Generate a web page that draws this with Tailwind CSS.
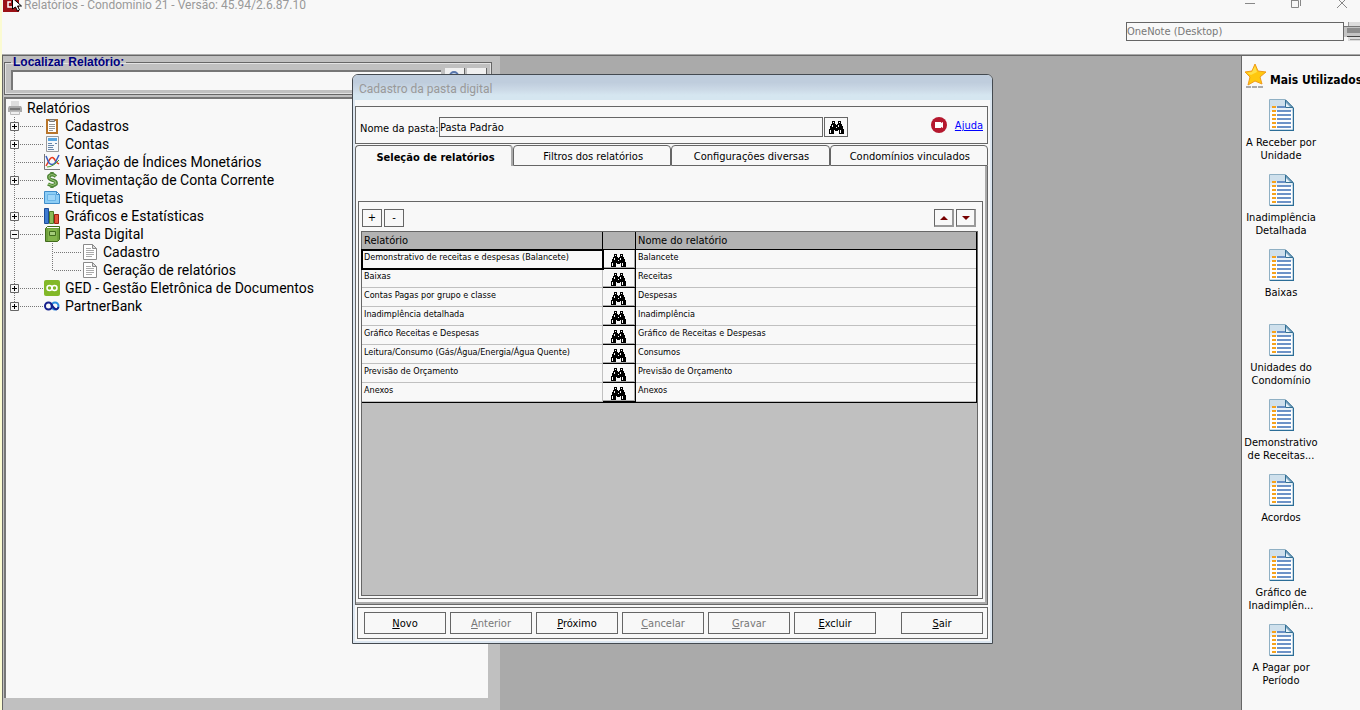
<!DOCTYPE html>
<html lang="pt-BR">
<head>
  <meta charset="UTF-8" />
  <meta name="viewport" content="width=device-width, initial-scale=1.0" />
  <title>Relatórios - Condomínio 21</title>
  <script src="https://cdn.jsdelivr.net/npm/@tailwindcss/browser@4"></script>
</head>
<body class="h-screen flex flex-col overflow-hidden bg-[#f8f8f8] border-l-2 border-[#fbfbd2] text-black text-[11px] leading-[13px] font-['DejaVu_Sans_Condensed','DejaVu_Sans',sans-serif]">

  <!-- Ícones reutilizados -->
  <svg class="hidden">
    <symbol id="binoculo" viewBox="0 0 15 13" shape-rendering="crispEdges">
      <path fill="#000" d="M3 0h3v3h1v1h1V3h1V0h3v3h1v2h1v3h1v5h-5V9H9v1H6V9H5v4H0V8h1V5h1V3h1z" />
      <path fill="#f8f8f8" d="M4 1h1v1H4zM10 1h1v1h-1zM3 4h1v2H3zM9 4h1v2H9zM7 6h1v1H7zM1 9h1v3H1zM11 9h1v3h-1z" />
    </symbol>
    <symbol id="relatorio" viewBox="0 0 25 32">
      <path fill="#fff" stroke="#8fb0c4" d="M.5.5h16l8 8v23H.5z" />
      <path fill="#cfe0ec" d="M1 1h15v6l-7 1-8 5z" />
      <path fill="#e9f1f7" d="M1 9l9-2 8 2h6v3H1z" />
      <path fill="none" stroke="#2b6d97" stroke-width="1.500" d="M24.500 9v22.500H1" />
      <path fill="#7fa8c4" stroke="#336f94" d="M16.500 1v7.500h7.500z" />
      <path fill="#e8f2f9" d="M17 4l4 4h-4z" />
      <path stroke="#f5a21d" stroke-width="2" d="M3 8h4M3 12h4M3 16h4M3 20h4M3 24h4M3 28h4" />
      <path stroke="#3f70b5" stroke-width="1.500" d="M8 8h8M8 12h14M8 16h14M8 20h14M8 24h14M8 28h14" />
    </symbol>
    <symbol id="folha" viewBox="0 0 16 16">
      <path fill="#fff" stroke="#8a8a8a" d="M1.500.5h9l4 4v11h-13z" />
      <path fill="#ddd" stroke="#8a8a8a" d="M10.500.5v4h4z" />
      <path stroke="#aaa" d="M4 4.500h5M4 6.500h8M4 8.500h8M4 10.500h8M4 12.500h6" />
    </symbol>
    <symbol id="no-mais" viewBox="0 0 34 18">
      <path stroke="#777" stroke-dasharray="1 1" d="M4.500 0v18M10 9.500h24" />
      <path fill="#f8f8f8" stroke="#666" d="M.5 5.500h8v8h-8z" />
      <path stroke="#000" d="M2 9.500h5M4.500 7v5" />
    </symbol>
    <symbol id="no-menos" viewBox="0 0 34 18">
      <path stroke="#777" stroke-dasharray="1 1" d="M4.500 0v18M10 9.500h24" />
      <path fill="#f8f8f8" stroke="#666" d="M.5 5.500h8v8h-8z" />
      <path stroke="#000" d="M2 9.500h5" />
    </symbol>
    <symbol id="no-ultimo" viewBox="0 0 34 18">
      <path stroke="#777" stroke-dasharray="1 1" d="M4.500 0v9M10 9.500h24" />
      <path fill="#f8f8f8" stroke="#666" d="M.5 5.500h8v8h-8z" />
      <path stroke="#000" d="M2 9.500h5M4.500 7v5" />
    </symbol>
    <symbol id="no-linha" viewBox="0 0 34 18">
      <path stroke="#777" stroke-dasharray="1 1" d="M4.500 0v18M6 9.500h28" />
    </symbol>
    <symbol id="no-filho" viewBox="0 0 72 18">
      <path stroke="#777" stroke-dasharray="1 1" d="M4.500 0v18M42.500 0v18M44 9.500h28" />
    </symbol>
    <symbol id="no-filho-ultimo" viewBox="0 0 72 18">
      <path stroke="#777" stroke-dasharray="1 1" d="M4.500 0v18M42.500 0v9M44 9.500h28" />
    </symbol>
  </svg>

  <!-- Barra de título -->
  <header class="flex flex-col h-[55px] shrink-0 border-b border-[#aaa]">
    <div class="flex h-4 items-start justify-between">
      <div class="flex items-start">
        <svg class="w-5 h-3 ml-px" viewBox="0 0 20 12">
          <path fill="#9b1116" d="M0 0h16v12H0z" />
          <path fill="none" stroke="#fff" stroke-width="1.500" d="M8 2H5v5h4" />
          <path fill="#fff" stroke="#000" d="M9.500-2v11l3-2 2 4 2-1-2-4h4z" />
        </svg>
        <h1 class="text-xs leading-[11px] text-[#999] ml-px font-[Roboto,sans-serif]">Relatórios - Condomínio 21 - Versão: 45.94/2.6.87.10</h1>
      </div>
      <div class="flex gap-[34px] pr-3 text-[#888]">
        <button aria-label="Minimizar"><svg class="w-3 h-2.5" viewBox="0 0 12 10"><path stroke="currentColor" d="M1 3.500h10" /></svg></button>
        <button aria-label="Restaurar"><svg class="w-3 h-2.5" viewBox="0 0 12 10"><path fill="none" stroke="currentColor" d="M1.500-2v9.500h7V.5h-7M10.500 0v6" /></svg></button>
        <button aria-label="Fechar"><svg class="w-3 h-2.5" viewBox="0 0 12 10"><path stroke="currentColor" d="M1-2l10 10M11-2L1 8" /></svg></button>
      </div>
    </div>
    <div class="flex justify-end pt-1.5">
      <select aria-label="Impressora" class="appearance-none w-[218px] h-[19px] border border-[#666] text-[#777]">
        <option>OneNote (Desktop)</option>
      </select>
      <button aria-label="Imprimir" class="w-4 h-[19px]">
        <svg class="w-4 h-[19px]" viewBox="0 0 16 19">
          <path fill="#dcdcdc" d="M4 0h12v19H4z" />
          <path fill="#c4c4c4" d="M0 5h16v10H0z" />
          <path fill="#8d8d8d" d="M3 6h13v5H3z" />
          <path fill="#444" d="M3 14h13v1H3z" />
          <path fill="#777" d="M0 4h16v1H0z" />
          <path stroke="#999" d="M4.500 0v4M6 17.500h10" />
        </svg>
      </button>
    </div>
  </header>

  <main class="relative flex flex-1 min-h-0 border-t border-[#666] bg-[#aaa]">

    <!-- Painel de relatórios -->
    <aside class="w-[498px] shrink-0 flex flex-col bg-[#c0c0c0] border-l border-[#666] pl-px pb-3">
      <fieldset class="h-[39px] w-[488px] border border-[#666] ring-1 ring-inset ring-[#f8f8f8]/60 pl-1.5 flex font-['Liberation_Sans',sans-serif]">
        <legend class="px-0.5 h-3 text-xs leading-3 font-bold text-[#000080]"><label for="localizar">Localizar Relatório:</label></legend>
        <input id="localizar" type="text" class="w-[430px] h-5 mt-0.5 bg-[#f8f8f8] border-t-2 border-l-2 border-[#777] px-1" />
        <button aria-label="Pesquisar" class="w-5 h-5 ml-1 bg-[#f0f0f0] border-r border-[#666]"><svg class="w-4 h-4 mx-auto" viewBox="0 0 16 16"><circle cx="7" cy="6" r="4" fill="#c8d8ec" stroke="#5876ac" stroke-width="2" /><path stroke="#777" stroke-width="2" d="M10 9l4 4" /></svg></button>
        <button aria-label="Limpar" class="w-5 h-5 ml-0.5 bg-[#f0f0f0] border-r border-[#666]"></button>
      </fieldset>
      <nav class="flex-1 w-[484px] mt-0.5 bg-[#f8f8f8] border-l-2 border-t-2 border-[#777] text-sm leading-[18px] font-[Roboto,sans-serif]">
        <div class="flex items-center h-[18px] pl-0.5 gap-[5px]">
          <svg class="w-3.5 h-4" viewBox="0 0 14 16"><path fill="#ddd" d="M3 1h8v5H3z" /><path fill="#aaa" d="M1 6h12l1 2v4H0V8z" /><path fill="#777" d="M2 8h10v2H2z" /><path fill="#eee" stroke="#bbb" d="M2.500 11.500h9v3h-9z" /></svg>
          <a href="#">Relatórios</a>
        </div>
        <ul class="pl-1">
          <li class="flex items-center h-[18px]">
            <button aria-label="Expandir"><svg class="w-[34px] h-[18px]"><use href="#no-mais" /></svg></button>
            <svg class="w-4 h-4" viewBox="0 0 16 16"><path fill="#fff" stroke="#b8752a" stroke-width="2" d="M3 2h10v13H3z" /><path fill="#ccc" stroke="#777" d="M5.500 1.500h5v2h-5z" /><path stroke="#999" d="M5 6.500h6M5 8.500h6M5 10.500h6M5 12.500h4" /></svg>
            <a href="#" class="ml-[5px]">Cadastros</a>
          </li>
          <li class="flex items-center h-[18px]">
            <button aria-label="Expandir"><svg class="w-[34px] h-[18px]"><use href="#no-mais" /></svg></button>
            <svg class="w-4 h-4" viewBox="0 0 16 16"><path fill="#f4f8fb" stroke="#999" d="M2.500.5h12v15h-12z" /><path fill="#58a6e0" d="M4 2h9v3H4z" /><path stroke="#6685a8" d="M4 7.500h4M4 9.500h6M4 11.500h5M4 13.500h6M11 7.500h2" /></svg>
            <a href="#" class="ml-[5px]">Contas</a>
          </li>
          <li class="flex items-center h-[18px]">
            <svg class="w-[34px] h-[18px]"><use href="#no-linha" /></svg>
            <svg class="w-4 h-4" viewBox="0 0 16 16"><path fill="none" stroke="#777" d="M.5 0v15.500H16" /><path fill="none" stroke="#e8391c" stroke-width="1.500" d="M2 12L6 5q3-4 6 3l3 2" /><path fill="none" stroke="#3a5fc0" stroke-width="1.500" d="M2 2l3 7q3 3 6 0l4-8" /><path fill="none" stroke="#55a030" d="M3 13q6 0 12-7" /></svg>
            <a href="#" class="ml-[5px]">Variação de Índices Monetários</a>
          </li>
          <li class="flex items-center h-[18px]">
            <button aria-label="Expandir"><svg class="w-[34px] h-[18px]"><use href="#no-mais" /></svg></button>
            <svg class="w-4 h-4" viewBox="0 0 16 16"><path fill="none" stroke="#4e8436" stroke-width="3.500" d="M12 4.500Q8 1 5 4q-1 3 3 4 5 1 4 4-3 3-8 0M8 0v3M8 13v3" /><path fill="none" stroke="#9cca79" d="M12 4.500Q8 1 5 4q-1 3 3 4 5 1 4 4-3 3-8 0" /></svg>
            <a href="#" class="ml-[5px]">Movimentação de Conta Corrente</a>
          </li>
          <li class="flex items-center h-[18px]">
            <svg class="w-[34px] h-[18px]"><use href="#no-linha" /></svg>
            <svg class="w-4 h-4" viewBox="0 0 16 16"><path fill="#8ccdf5" stroke="#3f8cc9" d="M.5 1.500h12l3 3v9H.5z" /><path fill="#9fd6f8" stroke="#6bb4e6" d="M3.500 4.500h8v6h-8z" /><path fill="#fff" stroke="#3f8cc9" d="M12.500 1.500v3h3z" /></svg>
            <a href="#" class="ml-[5px]">Etiquetas</a>
          </li>
          <li class="flex items-center h-[18px]">
            <button aria-label="Expandir"><svg class="w-[34px] h-[18px]"><use href="#no-mais" /></svg></button>
            <svg class="w-4 h-4" viewBox="0 0 16 16"><path fill="#3d7bd0" stroke="#1c4c98" d="M.5.5h4v15h-4z" /><path fill="#8dbb58" stroke="#4f7d28" d="M5.500 3.500h4v12h-4z" /><path fill="#e2543a" stroke="#9c1f12" d="M10.500 6.500h4v9h-4z" /></svg>
            <a href="#" class="ml-[5px]">Gráficos e Estatísticas</a>
          </li>
          <li>
            <div class="flex items-center h-[18px]">
              <button aria-label="Recolher"><svg class="w-[34px] h-[18px]"><use href="#no-menos" /></svg></button>
              <svg class="w-4 h-4" viewBox="0 0 16 16"><path fill="#6fa03c" stroke="#416b1c" d="M1.500 2.500l2-2h12v13l-2 2h-12z" /><path fill="#82b44b" d="M4 3h9v12H4z" /><path fill="#a5cb7b" stroke="#416b1c" d="M5.500 5.500h6v4h-6z" /><path stroke="#fff" d="M3 1.500h12" /></svg>
              <a href="#" class="ml-[5px]">Pasta Digital</a>
            </div>
            <ul>
              <li class="flex items-center h-[18px]">
                <svg class="w-[72px] h-[18px]"><use href="#no-filho" /></svg>
                <svg class="w-4 h-4"><use href="#folha" /></svg>
                <a href="#" class="ml-[5px]">Cadastro</a>
              </li>
              <li class="flex items-center h-[18px]">
                <svg class="w-[72px] h-[18px]"><use href="#no-filho-ultimo" /></svg>
                <svg class="w-4 h-4"><use href="#folha" /></svg>
                <a href="#" class="ml-[5px]">Geração de relatórios</a>
              </li>
            </ul>
          </li>
          <li class="flex items-center h-[18px]">
            <button aria-label="Expandir"><svg class="w-[34px] h-[18px]"><use href="#no-mais" /></svg></button>
            <svg class="w-4 h-4" viewBox="0 0 16 16"><rect width="16" height="16" rx="2" fill="#82b828" /><g fill="none" stroke="#fff" stroke-width="1.500"><circle cx="5.500" cy="8" r="2.500" /><circle cx="10.500" cy="8" r="2.500" /></g></svg>
            <a href="#" class="ml-[5px]">GED - Gestão Eletrônica de Documentos</a>
          </li>
          <li class="flex items-center h-[18px]">
            <button aria-label="Expandir"><svg class="w-[34px] h-[18px]"><use href="#no-ultimo" /></svg></button>
            <svg class="w-4 h-4" viewBox="0 0 16 16" fill="none" stroke-width="2"><circle cx="11" cy="8" r="3.500" stroke="#2b8fe0" /><circle cx="4.500" cy="8" r="3.500" stroke="#15208c" /><path stroke="#15208c" d="M7 6l3 4q3 3 4.500-1" /></svg>
            <a href="#" class="ml-[5px]">PartnerBank</a>
          </li>
        </ul>
      </nav>
    </aside>

    <!-- Mais utilizados -->
    <aside class="ml-auto w-[119px] shrink-0 bg-[#f8f8f8] border-l border-[#666] overflow-hidden">
      <h2 class="flex items-center gap-0.5 h-[43px] pl-0.5 text-xs font-bold whitespace-nowrap">
        <svg class="w-6 h-[26px] shrink-0 -mt-1" viewBox="0 0 24 26"><path fill="#ffc80f" stroke="#f09a18" d="M11 1l3 7 8 1-6 5 2 7-7-3-7 4 2-8-5-5 7-1z" /><path fill="#ffe04a" d="M11 3l2 6-6 3-4-2 5-1z" /><path stroke="#aaa" stroke-width="2" stroke-dasharray="5 1" d="M2 24h18" /></svg>
        <span class="pt-1">Mais Utilizados</span>
      </h2>
      <ul class="w-[78px] text-center">
        <li class="h-[75px]"><svg class="w-[25px] h-8 mx-auto"><use href="#relatorio" /></svg><a href="#" class="block pt-[5px]">A Receber por<br />Unidade</a></li>
        <li class="h-[75px]"><svg class="w-[25px] h-8 mx-auto"><use href="#relatorio" /></svg><a href="#" class="block pt-[5px]">Inadimplência<br />Detalhada</a></li>
        <li class="h-[75px]"><svg class="w-[25px] h-8 mx-auto"><use href="#relatorio" /></svg><a href="#" class="block pt-[5px]">Baixas</a></li>
        <li class="h-[75px]"><svg class="w-[25px] h-8 mx-auto"><use href="#relatorio" /></svg><a href="#" class="block pt-[5px]">Unidades do<br />Condomínio</a></li>
        <li class="h-[75px]"><svg class="w-[25px] h-8 mx-auto"><use href="#relatorio" /></svg><a href="#" class="block pt-[5px]">Demonstrativo<br />de Receitas...</a></li>
        <li class="h-[75px]"><svg class="w-[25px] h-8 mx-auto"><use href="#relatorio" /></svg><a href="#" class="block pt-[5px]">Acordos</a></li>
        <li class="h-[75px]"><svg class="w-[25px] h-8 mx-auto"><use href="#relatorio" /></svg><a href="#" class="block pt-[5px]">Gráfico de<br />Inadimplên...</a></li>
        <li class="h-[75px]"><svg class="w-[25px] h-8 mx-auto"><use href="#relatorio" /></svg><a href="#" class="block pt-[5px]">A Pagar por<br />Período</a></li>
      </ul>
    </aside>

    <!-- Janela: Cadastro da pasta digital -->
    <section role="dialog" aria-labelledby="titulo-janela" class="absolute left-[350px] top-[18px] w-[641px] bg-[#f8f8f8] border border-[#444a50] rounded-t-md overflow-hidden">
      <h2 id="titulo-janela" class="h-[25px] pl-1.5 pt-0.5 text-xs leading-6 text-[#999] bg-linear-to-b from-[#bfcddd] from-30% via-[#ccdae7] via-60% to-[#d5e6f0] to-80% font-[Roboto,sans-serif]">Cadastro da pasta digital</h2>
      <div class="border-x-2 border-b-2 border-[#dde7f1] pt-1.5 pr-0.5 pb-0.5">

        <div class="flex items-center h-[38px] border border-[#666] pl-1 pr-1">
          <label for="nome" class="w-[79px] pt-1.5 whitespace-nowrap">Nome da pasta:</label>
          <input id="nome" type="text" value="Pasta Padrão" class="w-[384px] h-5 mt-1 border border-[#666]" />
          <button aria-label="Procurar pasta" class="w-6 h-5 mt-1 ml-px border border-[#666] flex items-center justify-center"><svg class="w-[15px] h-[13px]"><use href="#binoculo" /></svg></button>
          <svg class="w-4 h-4 ml-auto" viewBox="0 0 16 16"><circle cx="8" cy="8" r="8" fill="#b5182e" /><path fill="#fff" d="M4 5h6v1l2-1v6l-2-1v1H4z" /></svg>
          <a href="#" class="ml-2 text-[#0000ff] underline">Ajuda</a>
        </div>

        <!-- Abas -->
        <div role="tablist" class="flex mt-px h-[21px]">
          <button role="tab" aria-selected="true" class="w-[158px] pt-0.5 pl-1 border-t border-l border-r-2 border-[#666] border-r-[#aaa] rounded-t font-bold">Seleção de relatórios</button>
          <button role="tab" class="flex-1 pt-0.5 pl-0.5 border border-[#666] rounded-t">Filtros dos relatórios</button>
          <button role="tab" class="flex-1 pt-0.5 pl-0.5 border border-[#666] rounded-t">Configurações diversas</button>
          <button role="tab" class="flex-1 pt-0.5 pl-0.5 border border-[#666] rounded-t">Condomínios vinculados</button>
        </div>

        <div role="tabpanel" class="border-x border-b border-[#666] shadow-[inset_-2px_-2px_#aaa] pt-[35px] pl-0.5 pr-1 pb-[5px]">
          <div class="border border-[#666] pt-[7px] pl-0.5 pr-1 pb-0.5">
            <div class="flex gap-0.5 pl-px pr-0.5">
              <button class="w-5 h-[18px] border border-[#666] leading-4">+</button>
              <button class="w-5 h-[18px] border border-[#666] leading-4">-</button>
              <button aria-label="Subir" class="w-5 h-[18px] border border-[#666] border-r-2 border-b-2 border-r-[#999] border-b-[#999] ml-auto"><svg class="w-2 h-1 mx-auto" viewBox="0 0 8 4"><path fill="#700" d="M4 0l4 4H0z" /></svg></button>
              <button aria-label="Descer" class="w-5 h-[18px] border border-[#666] border-r-2 border-b-2 border-r-[#999] border-b-[#999]"><svg class="w-2 h-1 mx-auto" viewBox="0 0 8 4"><path fill="#700" d="M0 0h8L4 4z" /></svg></button>
            </div>
            <div class="mt-1 h-[365px] bg-[#c0c0c0] border border-[#666]">
              <table class="w-full table-fixed border-separate border-spacing-0 border-r border-b border-black text-left">
                <colgroup><col class="w-[241px]" /><col class="w-[33px]" /><col /></colgroup>
                <thead class="bg-[#b2b2b2]">
                  <tr class="h-[18px]">
                    <th class="font-normal p-0 pl-0.5 border-r border-b border-black">Relatório</th>
                    <th class="p-0 border-r border-b border-black"></th>
                    <th class="font-normal p-0 pl-0.5 border-b border-black">Nome do relatório</th>
                  </tr>
                </thead>
                <tbody id="linhas" class="bg-[#f8f8f8] text-[9px] leading-[14px]"></tbody>
              </table>
            </div>
          </div>
        </div>

        <!-- Botões -->
        <div class="flex mt-0.5 ml-0.5 h-8 border border-[#666] pl-1.5 pr-1 py-1 gap-1">
          <button class="w-[82px] h-[22px] border border-[#666]"><u>N</u>ovo</button>
          <button disabled class="w-[82px] h-[22px] border border-[#666] text-[#777]"><u>A</u>nterior</button>
          <button class="w-[82px] h-[22px] border border-[#666]"><u>P</u>róximo</button>
          <button disabled class="w-[82px] h-[22px] border border-[#666] text-[#777]"><u>C</u>ancelar</button>
          <button disabled class="w-[82px] h-[22px] border border-[#666] text-[#777]"><u>G</u>ravar</button>
          <button class="w-[82px] h-[22px] border border-[#666]"><u>E</u>xcluir</button>
          <button class="w-[82px] h-[22px] border border-[#666] ml-auto"><u>S</u>air</button>
        </div>
      </div>
    </section>
  </main>

  <script>
    const relatorios = [
      ['Demonstrativo de receitas e despesas (Balancete)', 'Balancete'],
      ['Baixas', 'Receitas'],
      ['Contas Pagas por grupo e classe', 'Despesas'],
      ['Inadimplência detalhada', 'Inadimplência'],
      ['Gráfico Receitas e Despesas', 'Gráfico de Receitas e Despesas'],
      ['Leitura/Consumo (Gás/Água/Energia/Água Quente)', 'Consumos'],
      ['Previsão de Orçamento', 'Previsão de Orçamento'],
      ['Anexos', 'Anexos'],
    ];

    document.getElementById('linhas').innerHTML = relatorios.map(([relatorio, nome], i) => `
      <tr class="h-[19px]">
        <td class="p-0 pl-0.5 align-top whitespace-nowrap border-r border-b border-[#c0c0c0] ${i === 0 ? 'outline-2 -outline-offset-1 outline-black' : ''}">${relatorio}</td>
        <td class="p-0 border-r border-b border-black"><button aria-label="Procurar" class="flex w-full h-[18px] items-end justify-center border-r border-b border-[#aaa]"><svg class="w-[15px] h-[13px]"><use href="#binoculo" /></svg></button></td>
        <td class="p-0 pl-0.5 align-top border-b border-[#c0c0c0]">${nome}</td>
      </tr>`).join('');
  </script>
</body>
</html>
